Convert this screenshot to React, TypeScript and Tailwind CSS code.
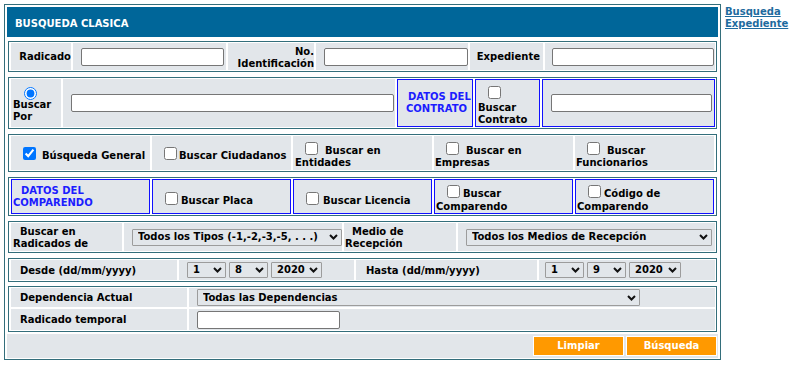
function Chevron() {
  return (
    <svg
      className="pointer-events-none absolute right-[4px] top-1/2 -translate-y-1/2"
      width="9"
      height="6"
      viewBox="0 0 9 6"
    >
      <path d="M1 1l3.5 3.5L8 1" fill="none" stroke="#111" strokeWidth="2" />
    </svg>
  );
}

function Select({ value, className }: { value: string; className: string }) {
  return (
    <div className={`relative ${className}`}>
      <select
        defaultValue={value}
        className="h-full w-full appearance-none rounded-[1px] border border-[#9c9c9c] bg-transparent pl-[5px] text-[10px] font-bold leading-[12px] text-black outline-none"
      >
        <option>{value}</option>
      </select>
      <Chevron />
    </div>
  );
}

function TextInput({ className }: { className: string }) {
  return <input type="text" className={`h-[18px] rounded-[2px] border border-[#767676] bg-white ${className}`} />;
}

function Check({ checked, className }: { checked?: boolean; className?: string }) {
  return <input type="checkbox" defaultChecked={checked} className={`h-[13px] w-[13px] shrink-0 ${className ?? ""}`} />;
}

export default function App() {
  return (
    <div className="flex min-h-screen items-start bg-white pl-[4px] pt-[4px] font-['DejaVu_Sans','Verdana',sans-serif] text-[10px] font-bold leading-[12px] text-black">
      <div className="flex w-[717px] flex-col border border-[#336e7b] px-[2px] pt-[2px] pb-[1px]">
        <div className="flex h-[30px] items-center bg-[#006699] pl-[8px] pt-[3px] text-white">BUSQUEDA CLASICA</div>

        {/* Radicado / Identificación / Expediente */}
        <div className="mx-[1px] mt-[4px] flex h-[31px] gap-[2px] border border-[#336e7b] bg-white py-[1px] pl-[2px] pr-[1px]">
          <div className="flex w-[60px] items-center justify-end bg-[#e2e6ea] pt-[1px]">Radicado</div>
          <div className="flex w-[153px] items-center bg-[#e2e6ea]">
            <TextInput className="ml-[8px] w-[143px]" />
          </div>
          <div className="flex w-[86px] flex-col justify-center bg-[#e2e6ea] pt-[2px] text-right">
            <div>No.</div>
            <div>Identificación</div>
          </div>
          <div className="flex w-[152px] items-center bg-[#e2e6ea]">
            <TextInput className="ml-[8px] w-[144px]" />
          </div>
          <div className="flex w-[73px] items-center justify-end bg-[#e2e6ea] pr-[3px] pt-[1px]">Expediente</div>
          <div className="flex w-[170px] items-center bg-[#e2e6ea]">
            <TextInput className="ml-[7px] w-[162px]" />
          </div>
        </div>

        {/* Buscar por / contrato */}
        <div className="mx-[1px] mt-[5px] flex h-[52px] gap-[2px] border border-[#336e7b] bg-white py-[1px] pl-[2px] pr-[1px]">
          <div className="flex w-[50px] flex-col bg-[#e2e6ea] pt-[8px]">
            <input type="radio" name="por" defaultChecked className="ml-[13px] h-[13px] w-[13px]" />
            <div className="-mt-[1px] pl-[2px]">
              <div>Buscar</div>
              <div>Por</div>
            </div>
          </div>
          <div className="flex w-[332px] items-center bg-[#e2e6ea]">
            <TextInput className="ml-[8px] w-[323px]" />
          </div>
          <div className="flex w-[76px] flex-col justify-center border border-[#1010ff] bg-[#e2e6ea] pl-[8px] text-[#1c1cff]">
            <div className="ml-[2px]">DATOS DEL</div>
            <div>CONTRATO</div>
          </div>
          <div className="flex w-[65px] flex-col border border-[#1010ff] bg-[#e2e6ea] pl-[2px] pt-[6px]">
            <Check className="ml-[10px]" />
            <div className="mt-[3px]">Buscar</div>
            <div>Contrato</div>
          </div>
          <div className="flex w-[173px] items-center border border-[#1010ff] bg-[#e2e6ea]">
            <TextInput className="ml-[8px] w-[161px]" />
          </div>
        </div>

        {/* Tipos de búsqueda */}
        <div className="mx-[1px] mt-[5px] flex h-[38px] gap-[2px] border border-[#336e7b] bg-white py-[1px] pl-[2px] pr-[1px]">
          <div className="w-[139px] bg-[#e2e6ea] pl-[12px] pt-[11px]">
            <div className="flex items-end">
              <Check checked className="mb-[2px]" />
              <span className="ml-[6px]">Búsqueda General</span>
            </div>
          </div>
          <div className="w-[139px] bg-[#e2e6ea] pl-[12px] pt-[11px]">
            <div className="flex items-end">
              <Check className="mb-[2px]" />
              <span className="ml-[2px] whitespace-nowrap">Buscar Ciudadanos</span>
            </div>
          </div>
          <div className="w-[139px] bg-[#e2e6ea] pl-[2px] pt-[6px]">
            <div className="flex items-end">
              <Check className="mb-[2px] ml-[10px]" />
              <span className="ml-[7px]">Buscar en</span>
            </div>
            <div>Entidades</div>
          </div>
          <div className="w-[139px] bg-[#e2e6ea] pl-[1px] pt-[6px]">
            <div className="flex items-end">
              <Check className="mb-[2px] ml-[11px]" />
              <span className="ml-[7px]">Buscar en</span>
            </div>
            <div>Empresas</div>
          </div>
          <div className="w-[139px] bg-[#e2e6ea] pl-[1px] pt-[6px]">
            <div className="flex items-end">
              <Check className="mb-[2px] ml-[11px]" />
              <span className="ml-[7px]">Buscar</span>
            </div>
            <div>Funcionarios</div>
          </div>
        </div>

        {/* Datos del comparendo */}
        <div className="mx-[1px] mt-[5px] flex h-[39px] gap-[2px] border border-[#336e7b] bg-white py-[1px] pl-[2px] pr-[1px]">
          <div className="flex w-[139px] flex-col justify-center border border-[#1010ff] bg-[#e2e6ea] pl-[1px] text-[#1c1cff]">
            <div className="ml-[8px]">DATOS DEL</div>
            <div>COMPARENDO</div>
          </div>
          <div className="w-[139px] border border-[#1010ff] bg-[#e2e6ea] pl-[12px] pt-[12px]">
            <div className="flex items-end">
              <Check className="mb-[2px]" />
              <span className="ml-[3px]">Buscar Placa</span>
            </div>
          </div>
          <div className="w-[139px] border border-[#1010ff] bg-[#e2e6ea] pl-[12px] pt-[12px]">
            <div className="flex items-end">
              <Check className="mb-[2px]" />
              <span className="ml-[4px]">Buscar Licencia</span>
            </div>
          </div>
          <div className="w-[139px] border border-[#1010ff] bg-[#e2e6ea] pl-[1px] pt-[5px]">
            <div className="flex items-end">
              <Check className="mb-[2px] ml-[11px]" />
              <span className="ml-[3px]">Buscar</span>
            </div>
            <div className="mt-[1px]">Comparendo</div>
          </div>
          <div className="w-[139px] border border-[#1010ff] bg-[#e2e6ea] pl-[1px] pt-[5px]">
            <div className="flex items-end">
              <Check className="mb-[2px] ml-[11px]" />
              <span className="ml-[3px]">Código de</span>
            </div>
            <div className="mt-[1px]">Comparendo</div>
          </div>
        </div>

        {/* Radicados / medio */}
        <div className="mx-[1px] mt-[5px] flex h-[32px] gap-[2px] border border-[#336e7b] bg-white py-[1px] pl-[2px] pr-[1px]">
          <div className="flex w-[111px] flex-col justify-center bg-[#e2e6ea] pl-[2px] pt-[2px]">
            <div className="ml-[7px]">Buscar en</div>
            <div>Radicados de</div>
          </div>
          <div className="flex w-[218px] items-center bg-[#e2e6ea]">
            <Select value="Todos los Tipos (-1,-2,-3,-5, . . .)" className="ml-[8px] h-[17px] w-[210px]" />
          </div>
          <div className="flex w-[112px] flex-col justify-center bg-[#e2e6ea] pt-[2px]">
            <div className="ml-[8px]">Medio de</div>
            <div className="ml-[1px]">Recepción</div>
          </div>
          <div className="flex w-[257px] items-center bg-[#e2e6ea]">
            <Select value="Todos los Medios de Recepción" className="ml-[8px] h-[17px] w-[246px]" />
          </div>
        </div>

        {/* Fechas */}
        <div className="mx-[1px] mt-[5px] flex h-[24px] gap-[2px] border border-[#336e7b] bg-white py-[1px] pl-[2px] pr-[1px]">
          <div className="flex w-[166px] items-center bg-[#e2e6ea] pl-[9px] pt-[1px]">Desde (dd/mm/yyyy)</div>
          <div className="flex w-[175px] items-center gap-[3px] bg-[#e2e6ea] pl-[8px]">
            <Select value="1" className="h-[16px] w-[39px]" />
            <Select value="8" className="h-[16px] w-[39px]" />
            <Select value="2020" className="h-[16px] w-[51px]" />
          </div>
          <div className="flex w-[181px] items-center bg-[#e2e6ea] pl-[10px] pt-[1px]">Hasta (dd/mm/yyyy)</div>
          <div className="flex w-[176px] items-center gap-[3px] bg-[#e2e6ea] pl-[6px]">
            <Select value="1" className="h-[16px] w-[39px]" />
            <Select value="9" className="h-[16px] w-[39px]" />
            <Select value="2020" className="h-[16px] w-[52px]" />
          </div>
        </div>

        {/* Dependencia */}
        <div className="mx-[1px] mt-[4px] grid h-[46px] grid-cols-[176px_526px] grid-rows-[19px_21px] gap-[2px] border border-[#336e7b] bg-white py-[1px] pl-[2px] pr-[1px]">
          <div className="flex items-center bg-[#e2e6ea] pl-[9px]">Dependencia Actual</div>
          <div className="flex items-center bg-[#e2e6ea]">
            <Select value="Todas las Dependencias" className="ml-[8px] h-[17px] w-[443px]" />
          </div>
          <div className="flex items-center bg-[#e2e6ea] pl-[9px]">Radicado temporal</div>
          <div className="flex items-center bg-[#e2e6ea]">
            <TextInput className="ml-[8px] w-[143px]" />
          </div>
        </div>

        {/* Botones */}
        <div className="mt-[2px] flex h-[24px] items-center justify-end gap-[2px] bg-[#e2e6ea] pr-[1px]">
          <button className="h-[20px] w-[91px] border border-white bg-[#ff9900] text-white">Limpiar</button>
          <button className="h-[20px] w-[91px] border border-white bg-[#ff9900] text-white">Búsqueda</button>
        </div>
      </div>

      <a href="#" className="ml-[4px] mt-[2px] flex flex-col text-[#1e6b9e] underline">
        <span>Busqueda</span>
        <span>Expediente</span>
      </a>
    </div>
  );
}
